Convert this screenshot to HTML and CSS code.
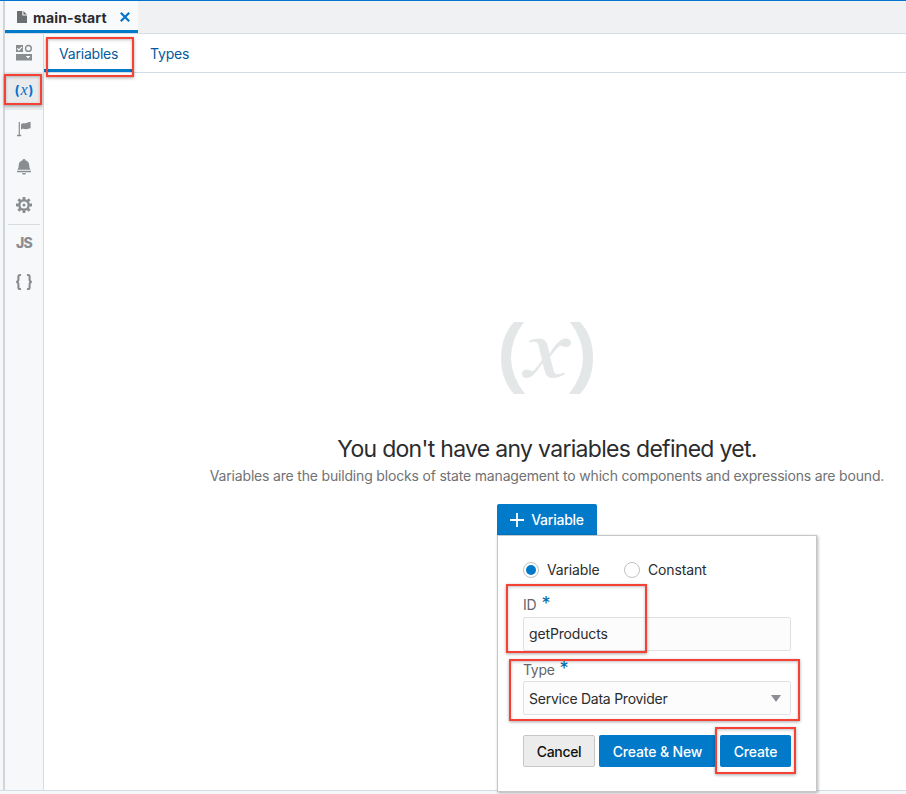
FILE: index.html
```html
<!DOCTYPE html>
<html lang="en">
<head>
<meta charset="utf-8">
<title>main-start</title>
<link rel="stylesheet" href="styles.css">
</head>
<body>
<div class="app">
  <header class="tabbar">
    <div class="tab">
      <svg class="file-icon" width="10" height="12" viewBox="0 0 10 12"><path d="M0 0h5.3v4.400H10V12H0z M6.400 0L10 3.400H6.400z" fill="#6b6f72"/></svg>
      <span class="tab-name">main-start</span>
      <svg class="close-icon" width="10" height="10" viewBox="0 0 10 10"><path d="M.8.8l8.400 8.400M9.200.8L.8 9.200" stroke="#0572ce" stroke-width="2.200"/></svg>
    </div>
  </header>
  <div class="body">
    <nav class="rail">
      <div class="rail-item">
        <svg width="18" height="18" viewBox="0 0 18 18"><path d="M1 1h7v7H1z M1 10h16v6.600H1z" fill="#8a8d90"/><path d="M2.300 4.400l1.600 1.700 3-3.300" fill="none" stroke="#fff" stroke-width="1.100"/><circle cx="13.400" cy="4.400" r="2.900" fill="none" stroke="#8a8d90" stroke-width="1.400"/><path d="M10.800 12h4.600L13.100 14.600z" fill="#fff"/></svg>
      </div>
      <div class="rail-item active"><span class="x-icon"><b>(</b><i>x</i><b>)</b></span><span class="mark mark-rail"></span></div>
      <div class="rail-item">
        <svg width="18" height="18" viewBox="0 0 18 18"><path d="M3.700 2h1.200v12.800h1.300v1.500H2v-1.500h1.700z" fill="#8a8d90"/><path d="M6 4.400C8 2.200 9.400 3.800 11.200 3.100c1.500-.5 2.300-1.100 4.400-1.100v6.200c-1.800-.1-2.800.8-4.300 1C9.400 9.400 8 7.700 6 9.800z" fill="#8a8d90"/></svg>
      </div>
      <div class="rail-item">
        <svg width="18" height="18" viewBox="0 0 18 18"><path d="M9 1c.9 0 1.300.6 1.300 1.300C13 2.900 14.300 5 14.300 7.500c0 2.300.6 3.600 1.600 4.300H2.100C3.100 11.100 3.700 9.800 3.700 7.500 3.700 5 5 2.900 7.700 2.300 7.700 1.600 8.100 1 9 1z M2 12.800h14v1.500H2z M7 15.100h4c-.3 1-1 1.500-2 1.500s-1.700-.5-2-1.500z" fill="#8a8d90"/></svg>
      </div>
      <div class="rail-item gear">
        <svg width="18" height="18" viewBox="0 0 18 18"><g fill="none" stroke="#8a8d90"><circle cx="9" cy="9" r="4.700" stroke-width="2.400"/><path d="M9 1v3M9 14v3M1 9h3M14 9h3M3.350 3.350l2 2M12.650 12.650l2 2M3.350 14.650l2-2M12.650 5.350l2-2" stroke-width="2.800"/></g><circle cx="9" cy="9" r="1.500" fill="#8a8d90"/></svg>
      </div>
      <div class="rail-item split"><span class="js-icon">JS</span></div>
      <div class="rail-item"><svg width="18" height="18" viewBox="0 0 18 18"><path d="M6 2H5Q3.400 2 3.400 3.600V6.800Q3.400 8.800 1.200 9Q3.400 9.200 3.400 11.200V14.400Q3.400 16 5 16H6M12 2h1Q14.600 2 14.600 3.600V6.800Q14.600 8.800 16.800 9Q14.600 9.200 14.600 11.200V14.400Q14.600 16 13 16H12" fill="none" stroke="#8a8d90" stroke-width="2.100"/></svg></div>
    </nav>
    <main class="content">
      <div class="subtabs">
        <div class="subtab selected">Variables<span class="mark mark-sub"></span></div>
        <div class="subtab">Types</div>
      </div>
      <section class="empty">
        <svg class="hero" width="94" height="74" viewBox="0 0 94 74"><g fill="#e4e7e7"><path d="M14 1H24Q11 18 11 37Q11 55 25 73H14Q1 59 1 37Q1 15 14 1z"/><path d="M80 1H70Q83 18 83 37Q83 55 69 73H80Q93 59 93 37Q93 15 80 1z"/><path d="M29 20Q34 17 40 17.500Q46 18 47.500 24L49.500 33Q59 17 65.500 17.500Q71 17.500 71 22Q70.500 26 66 26Q63 25.500 61 24.500Q57 26 50 36L54 51Q55 55 64.500 51.500V53.500Q58 57 52.500 57Q46.500 57 45 51L42.500 42Q33 57 27 57Q22 57 22 52.500Q22.500 48.500 27 48.500Q30 49 32.500 50.500Q36 48 42 39L38.500 24Q37 19 29 21.500z"/></g></svg>
        <h1 class="title">You don't have any variables defined yet.</h1>
        <p class="subtitle">Variables are the building blocks of state management to which components and expressions are bound.</p>
        <div class="create">
          <button class="add"><svg width="14" height="14" viewBox="0 0 14 14"><path d="M7 0v14M0 7h14" stroke="#fff" stroke-width="1.800"/></svg><span>Variable</span></button>
          <form class="popup">
            <div class="radios">
              <label class="radio on"><span class="dot"></span><span class="radio-text">Variable</span></label>
              <label class="radio"><span class="dot"></span><span class="radio-text">Constant</span></label>
            </div>
            <div class="label">ID <span class="star">*</span></div>
            <div class="field"><span class="value">getProducts</span><span class="mark mark-id"></span></div>
            <div class="label second">Type <span class="star">*</span></div>
            <div class="field"><span class="provider">Service Data Provider</span><svg width="10" height="7" viewBox="0 0 10 7"><path d="M0 0h10L5 7z" fill="#8a8d92"/></svg><span class="mark mark-type"></span></div>
            <div class="actions">
              <button type="button" class="btn cancel">Cancel</button>
              <button type="button" class="btn new">Create &amp; New</button>
              <button type="button" class="btn save">Create<span class="mark mark-save"></span></button>
            </div>
          </form>
        </div>
      </section>
    </main>
  </div>
  <footer class="footer"></footer>
</div>
</body>
</html>
```
FILE: styles.css
```css
* { box-sizing: border-box; }
body { margin: 0; background: #fff; font-family: Inter, "Liberation Sans", sans-serif; font-size: 14px; color: #2b2c2d; }
button { font: inherit; padding: 0; margin: 0; }
.app { width: 906px; height: 794px; overflow: hidden; display: flex; flex-direction: column; border-top: 1px solid #0572ce; background: #f5f8fa; }
.tabbar { height: 33px; margin-left: 3px; border-left: 2px solid #d2d4d7; border-bottom: 1px solid #d4dde4; background: #eff1f3; flex: none; }
.tab { width: 133px; height: 32px; background: #f9fafb; border-bottom: 3px solid #007ac9; display: flex; align-items: center; padding: 3px 0 0 12px; }
.tab-name { font-weight: 700; font-size: 14px; letter-spacing: 0.15px; width: 75px; margin-left: 6px; white-space: nowrap; }
.close-icon { margin-left: 12px; }
.body { height: 756px; margin-left: 3px; border-left: 2px solid #d2d4d7; display: flex; flex: none; }
.rail { width: 39px; flex: none; background: #f7f8fa; border-right: 1px solid #d4dde4; }
.rail-item { height: 38.300px; display: flex; align-items: center; justify-content: center; position: relative; }
.rail-item.active { background: #e9eaec; height: 37.500px; }
.rail-item.gear { padding-bottom: 1px; }
.rail-item.split::before { content: ""; position: absolute; left: 3px; right: 3px; top: -1px; height: 1px; background: #d8dcdf; }
.x-icon { color: #0572ce; font-size: 13px; line-height: 16px; display: flex; align-items: center; padding-bottom: 2px; }
.x-icon i { font: italic 16px/14px "Liberation Serif", serif; padding: 0 1px; }
.js-icon { font: 800 14px/18px Inter, sans-serif; letter-spacing: -0.8px; color: #8a8d90; padding-bottom: 1px; }
.content { flex: 1; min-width: 0; background: #fff; }
.subtabs { height: 39px; border-bottom: 1px solid #d4dde4; display: flex; color: #045a9c; letter-spacing: -0.2px; }
.subtab { padding: 0 16px; line-height: 40px; position: relative; height: 38px; }
.subtab.selected { width: 90px; padding-left: 15px; border-bottom: 3px solid #007ac9; }
.empty { padding-left: 144px; display: flex; flex-direction: column; align-items: center; }
.hero { margin-top: 248px; display: block; }
.title { margin: 39px 0 0; font-size: 23px; line-height: 30px; font-weight: 400; letter-spacing: -0.7px; white-space: nowrap; }
.subtitle { margin: 2px 0 0; line-height: 20px; letter-spacing: -0.18px; white-space: nowrap; color: #707274; }
.create { margin-top: 18px; position: relative; width: 100px; letter-spacing: -0.15px; }
.add { width: 100px; height: 31px; border: 0; border-radius: 2px 2px 0 0; background: #007ac9; color: #fff; font-weight: 500; letter-spacing: -0.25px; display: flex; align-items: center; justify-content: center; gap: 7px; }
.popup { position: absolute; left: 0; top: 31px; width: 320px; height: 257px; border: 1px solid #c4c6c9; background: #fff; box-shadow: 1px 1px 3px rgba(0,0,0,.3); padding: 25px 25px 0; }
.radios { display: flex; height: 18px; }
.radio { display: flex; align-items: center; gap: 8px; width: 101px; }
.radio-text { padding-bottom: 2px; }
.dot { width: 16px; height: 16px; border: 1px solid #bfc2c4; border-radius: 50%; flex: none; display: flex; align-items: center; justify-content: center; background: #fff; }
.radio.on .dot::after { content: ""; width: 10px; height: 10px; border-radius: 50%; background: #007ac9; }
.label { margin-top: 16px; height: 22px; line-height: 20px; color: #646668; display: flex; }
.label.second { margin-top: 9px; height: 21px; line-height: 19px; letter-spacing: -0.3px; }
.star { color: #0569a8; margin: -1px 0 0 5px; font-size: 18px; line-height: 19px; }
.field { width: 268px; height: 34px; border: 1px solid #dfe1e3; border-radius: 2px; background: #fcfcfc; padding: 0 9px 0 5px; display: flex; align-items: center; justify-content: space-between; position: relative; }
.value { padding-bottom: 1px; }
.provider { letter-spacing: -0.25px; padding-top: 1px; }
.actions { margin-top: 20px; display: flex; gap: 4px; }
.btn { height: 32px; border: 0; border-radius: 2px; background: #007ac9; color: #fff; font-weight: 500; position: relative; white-space: nowrap; letter-spacing: -0.15px; }
.cancel { width: 72px; background: #ececec; border: 1px solid #c5c7c9; color: #111; letter-spacing: -0.35px; }
.new { width: 117px; }
.save { width: 71px; }
.mark { position: absolute; border: 2px solid #f44336; box-shadow: 0 1px 3px rgba(0,0,0,.35), inset 0 1px 3px rgba(0,0,0,.25); pointer-events: none; z-index: 2; }
.mark-rail { left: -1px; top: 2px; width: 38px; height: 31px; }
.mark-sub { left: 2px; top: 3px; width: 88px; height: 40px; }
.mark-id { left: -18px; top: -34px; width: 141px; height: 69px; }
.mark-type { left: -15px; top: -23px; width: 291px; height: 62px; }
.mark-save { left: -5px; top: -8px; width: 81px; height: 47px; }
.footer { height: 4px; border-top: 1px solid #d4dde4; background: #f5f8fa; flex: none; }
```
